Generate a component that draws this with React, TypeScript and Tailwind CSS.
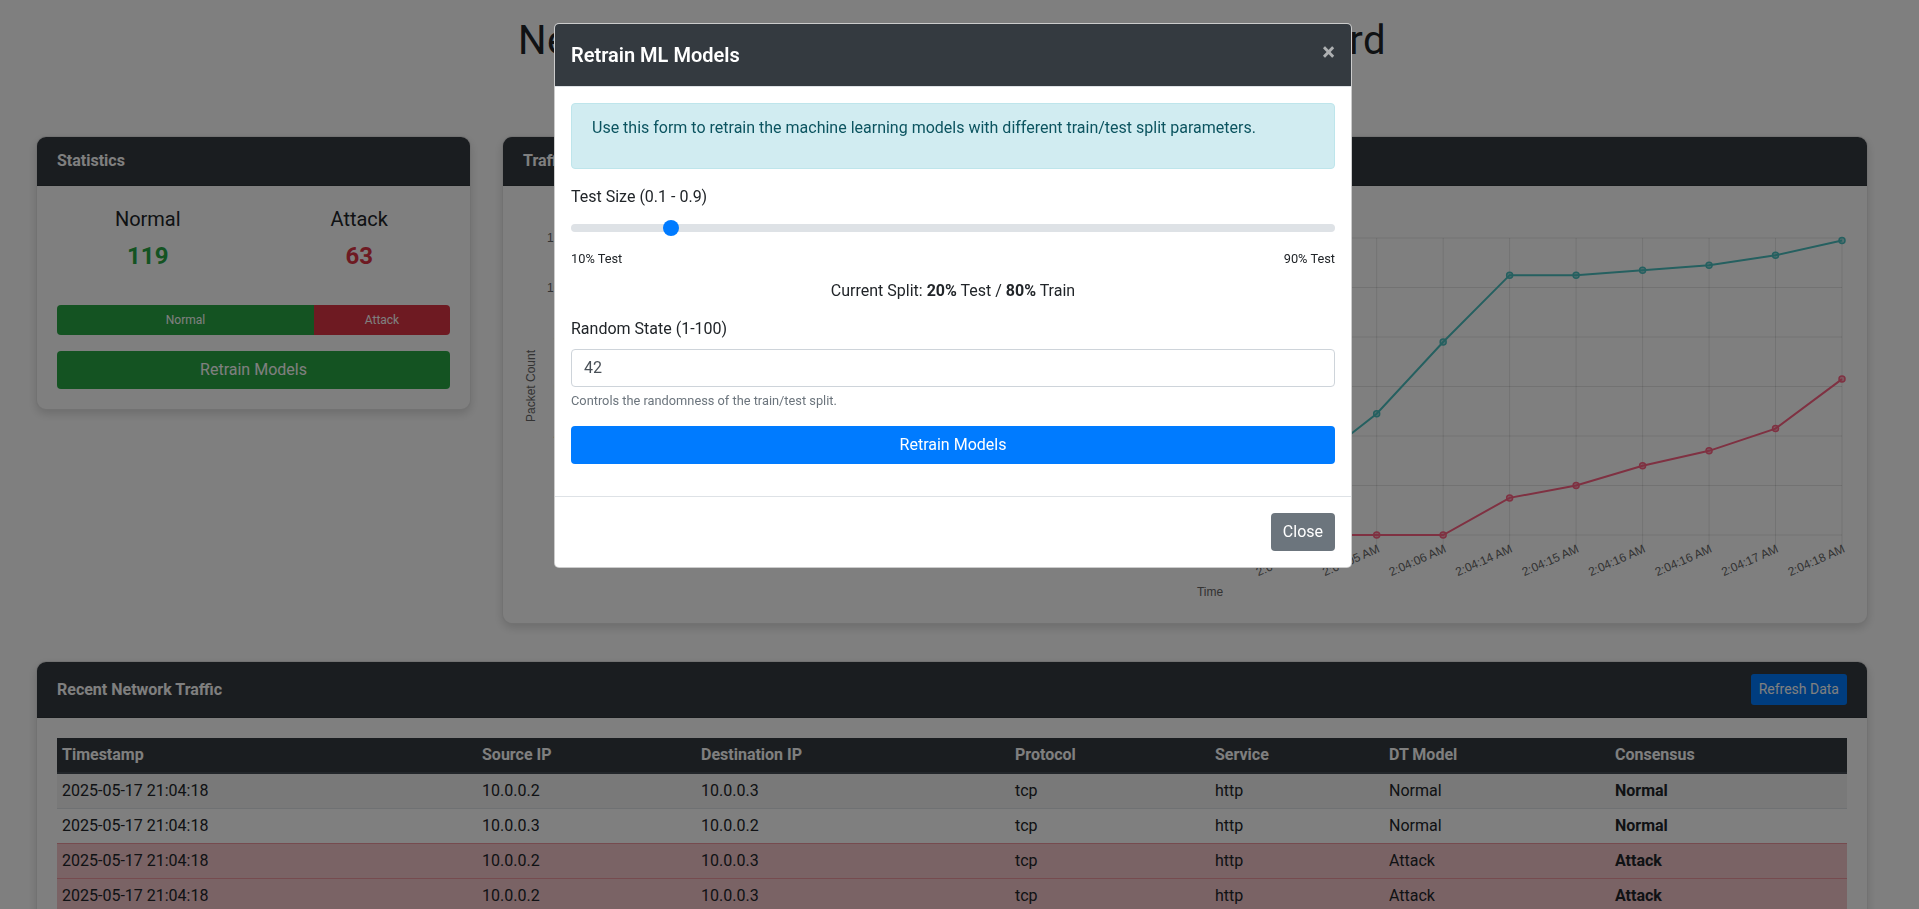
import React from 'react';

type Row = {
  time: string;
  src: string;
  dst: string;
  proto: string;
  service: string;
  dt: string;
  consensus: string;
};

const rows: Row[] = [
  { time: '2025-05-17 21:04:18', src: '10.0.0.2', dst: '10.0.0.3', proto: 'tcp', service: 'http', dt: 'Normal', consensus: 'Normal' },
  { time: '2025-05-17 21:04:18', src: '10.0.0.3', dst: '10.0.0.2', proto: 'tcp', service: 'http', dt: 'Normal', consensus: 'Normal' },
  { time: '2025-05-17 21:04:18', src: '10.0.0.2', dst: '10.0.0.3', proto: 'tcp', service: 'http', dt: 'Attack', consensus: 'Attack' },
  { time: '2025-05-17 21:04:18', src: '10.0.0.2', dst: '10.0.0.3', proto: 'tcp', service: 'http', dt: 'Attack', consensus: 'Attack' },
  { time: '2025-05-17 21:04:17', src: '10.0.0.3', dst: '10.0.0.2', proto: 'tcp', service: 'http', dt: 'Normal', consensus: 'Normal' },
  { time: '2025-05-17 21:04:17', src: '10.0.0.2', dst: '10.0.0.3', proto: 'tcp', service: 'http', dt: 'Attack', consensus: 'Attack' },
  { time: '2025-05-17 21:04:16', src: '10.0.0.3', dst: '10.0.0.2', proto: 'tcp', service: 'http', dt: 'Normal', consensus: 'Normal' },
];

// only the recent ticks carry a label; the early ones are blank
const labels = [
  '', '', '', '', '', '', '', '', '', '', '', '2:04:04 AM', '2:04:05 AM', '2:04:06 AM',
  '2:04:14 AM', '2:04:15 AM', '2:04:16 AM', '2:04:16 AM', '2:04:17 AM', '2:04:18 AM',
];
const normalSeries = [0, 2, 4, 6, 8, 10, 12, 15, 18, 21, 24, 28, 49, 78, 105, 105, 107, 109, 113, 119];
const attackSeries = [0, 0, 0, 0, 0, 0, 0, 0, 0, 0, 0, 0, 0, 0, 15, 20, 28, 34, 43, 63];

// chart area inside the svg
const LEFT = 56;
const RIGHT = 1319;
const TOP = 32;
const BOTTOM = 329;
const xAt = (i: number) => LEFT + (i * (RIGHT - LEFT)) / (labels.length - 1);
const yAt = (v: number) => BOTTOM - (v / 120) * (BOTTOM - TOP);

function TrafficChart() {
  const teal = 'rgb(75,192,192)';
  const pink = 'rgb(255,99,132)';
  const path = (data: number[]) => data.map((v, i) => `${i === 0 ? 'M' : 'L'}${xAt(i)},${yAt(v)}`).join(' ');
  return (
    <svg viewBox="0 0 1324 397" className="block h-[397px] w-full" fontFamily="'Liberation Sans', Arial, sans-serif">
      {/* legend */}
      <rect x="545" y="6" width="40" height="12" fill="rgba(75,192,192,0.2)" stroke={teal} strokeWidth="2" />
      <text x="591" y="16" fontSize="12" fill="#666">Normal Traffic</text>
      <rect x="690" y="6" width="40" height="12" fill="rgba(255,99,132,0.2)" stroke={pink} strokeWidth="2" />
      <text x="736" y="16" fontSize="12" fill="#666">Attack Traffic</text>

      {/* horizontal grid + y ticks */}
      {[0, 20, 40, 60, 80, 100, 120].map((v) => (
        <g key={v}>
          <line x1={LEFT - 10} x2={RIGHT} y1={yAt(v)} y2={yAt(v)} stroke="rgba(0,0,0,0.1)" />
          <text x={LEFT - 12} y={yAt(v) + 4} fontSize="12" fill="#666" textAnchor="end">{v}</text>
        </g>
      ))}
      {/* vertical grid + x ticks */}
      {labels.map((l, i) => (
        <g key={i}>
          <line x1={xAt(i)} x2={xAt(i)} y1={TOP} y2={BOTTOM + 10} stroke="rgba(0,0,0,0.1)" />
          {l && (
            <text transform={`translate(${xAt(i) + 2},${BOTTOM + 13}) rotate(-24)`} fontSize="12" fill="#666" textAnchor="end" dy="4">
              {l}
            </text>
          )}
        </g>
      ))}
      <text transform="translate(12,180) rotate(-90)" fontSize="12" fill="#666" textAnchor="middle">Packet Count</text>
      <text x="687" y="390" fontSize="12" fill="#666" textAnchor="middle">Time</text>

      <path d={path(normalSeries)} fill="none" stroke={teal} strokeWidth="2" />
      <path d={path(attackSeries)} fill="none" stroke={pink} strokeWidth="2" />
      {normalSeries.map((v, i) => (
        <circle key={`n${i}`} cx={xAt(i)} cy={yAt(v)} r="3" fill="rgba(75,192,192,0.5)" stroke={teal} strokeWidth="1.5" />
      ))}
      {attackSeries.map((v, i) => (
        <circle key={`a${i}`} cx={xAt(i)} cy={yAt(v)} r="3" fill="rgba(255,99,132,0.5)" stroke={pink} strokeWidth="1.5" />
      ))}
    </svg>
  );
}

function RetrainModal() {
  return (
    <div className="fixed inset-0 z-50 overflow-y-auto">
      <div className="ml-[554px] mt-[23px] w-[798px]">
        <div className="overflow-hidden rounded-[5px] border border-black/20 bg-white text-[#212529]">
          {/* header */}
          <div className="flex items-start justify-between border-b border-[#dee2e6] bg-[#343a40] p-4 text-white">
            <h5 className="text-[20px] font-semibold leading-[30px]">Retrain ML Models</h5>
            <button className="-my-4 -mr-4 p-4 text-[24px] font-bold leading-none text-white opacity-60">×</button>
          </div>

          {/* body */}
          <div className="p-4">
            <div className="mb-4 rounded-[4px] border border-[#bee5eb] bg-[#d1ecf1] px-5 py-3 text-[#0c5460]">
              <p className="mb-4 leading-6">Use this form to retrain the machine learning models with different train/test split parameters.</p>
            </div>

            <div className="mb-[14px]">
              <label className="mb-2 mt-[1px] block leading-6">Test Size (0.1 - 0.9)</label>
              <div className="relative flex h-[22px] items-center">
                <div className="h-2 w-full rounded-full bg-[#dee2e6]" />
                <div className="absolute left-[92px] top-[3px] h-4 w-4 rounded-full bg-[#007bff]" />
              </div>
              <div className="mt-[10px] flex justify-between text-[12.8px] leading-[19px]">
                <span>10% Test</span>
                <span>90% Test</span>
              </div>
              <div className="mt-[11px] text-center leading-6">
                Current Split: <strong>20%</strong> Test / <strong>80%</strong> Train
              </div>
            </div>

            <div className="mb-4">
              <label className="mb-2 block leading-6">Random State (1-100)</label>
              <div className="flex h-[38px] items-center rounded-[4px] border border-[#ced4da] px-3 text-[#495057]">42</div>
              <small className="mt-1 block text-[12.8px] leading-[19px] text-[#6c757d]">Controls the randomness of the train/test split.</small>
            </div>

            <button className="mb-4 flex h-[38px] w-full items-center justify-center rounded-[4px] bg-[#007bff] text-white">Retrain Models</button>
          </div>

          {/* footer */}
          <div className="flex justify-end border-t border-[#dee2e6] p-3">
            <button className="m-1 h-[38px] rounded-[4px] bg-[#6c757d] px-3 text-white">Close</button>
          </div>
        </div>
      </div>
    </div>
  );
}

export default function App() {
  const normal = 119;
  const attack = 63;
  const normalPct = (normal / (normal + attack)) * 100;

  return (
    <div className="relative min-h-screen bg-white font-['Roboto','Noto_Sans',sans-serif] text-[16px] text-[#212529]">
      <div className="pb-10 pl-[36px] pr-[51px]">
        <h1 className="mb-[71px] pt-[17px] text-center text-[40px] font-normal leading-[48px] tracking-[0.58px]">
          Network Intrusion Detection System Dashboard
        </h1>

        <div className="grid grid-cols-[435px_1fr] items-start gap-x-[31px]">
          {/* Statistics */}
          <div className="overflow-hidden rounded-[10px] border border-black/10 bg-white shadow-[0_4px_10px_rgba(0,0,0,0.15)]">
            <div className="border-b border-black/10 bg-[#343a40] px-5 py-3 font-bold leading-6 text-white">Statistics</div>
            <div className="p-5">
              <div className="-mx-[15px] grid grid-cols-2 text-center">
                <div>
                  <h5 className="mt-[1px] text-[20px] leading-6">Normal</h5>
                  <div className="mt-[11px] text-[24px] font-bold leading-[29px] text-[#28a745]">{normal}</div>
                </div>
                <div>
                  <h5 className="mt-[1px] text-[20px] leading-6">Attack</h5>
                  <div className="mt-[11px] text-[24px] font-bold leading-[29px] text-[#dc3545]">{attack}</div>
                </div>
              </div>
              <div className="mt-[34px] flex h-[30px] overflow-hidden rounded-[4px] bg-[#e9ecef] text-[12px] text-white">
                <div className="flex items-center justify-center bg-[#28a745]" style={{ width: `${normalPct}%` }}>Normal</div>
                <div className="flex flex-1 items-center justify-center bg-[#dc3545]">Attack</div>
              </div>
              <button className="mt-4 flex h-[38px] w-full items-center justify-center rounded-[4px] bg-[#28a745] text-white">Retrain Models</button>
            </div>
          </div>

          {/* Traffic chart */}
          <div className="overflow-hidden rounded-[10px] border border-black/10 bg-white shadow-[0_4px_10px_rgba(0,0,0,0.15)]">
            <div className="border-b border-black/10 bg-[#343a40] px-5 py-3 font-bold leading-6 text-white">Traffic Over Time</div>
            <div className="p-5">
              <TrafficChart />
            </div>
          </div>
        </div>

        {/* Recent traffic */}
        <div className="mt-[37px] overflow-hidden rounded-[10px] border border-black/10 bg-white shadow-[0_4px_10px_rgba(0,0,0,0.15)]">
          <div className="flex items-center justify-between border-b border-black/10 bg-[#343a40] px-5 py-3 text-white">
            <span className="font-bold leading-6">Recent Network Traffic</span>
            <button className="h-[31px] rounded-[3px] bg-[#007bff] px-2 text-[14px] text-white">Refresh Data</button>
          </div>
          <div className="p-5">
            <table className="w-full table-fixed border-collapse text-left">
              <colgroup>
                <col className="w-[420px]" />
                <col className="w-[219px]" />
                <col className="w-[314px]" />
                <col className="w-[200px]" />
                <col className="w-[174px]" />
                <col className="w-[226px]" />
                <col />
              </colgroup>
              <thead>
                <tr className="bg-[#343a40] text-white">
                  {['Timestamp', 'Source IP', 'Destination IP', 'Protocol', 'Service', 'DT Model', 'Consensus'].map((h) => (
                    <th key={h} className="border-b-2 border-[#454d55] px-[5px] py-[5px] font-bold leading-6">{h}</th>
                  ))}
                </tr>
              </thead>
              <tbody>
                {rows.map((r, i) => {
                  const attackRow = r.consensus === 'Attack';
                  const bg = attackRow ? 'bg-[#f5c6cb]' : i % 2 === 0 ? 'bg-black/5' : 'bg-white';
                  const border = attackRow ? 'border-[#ed969e]' : 'border-[#dee2e6]';
                  return (
                    <tr key={i} className={bg}>
                      {[r.time, r.src, r.dst, r.proto, r.service, r.dt].map((c, j) => (
                        <td key={j} className={`border-t ${border} px-[5px] py-[5px] leading-6`}>{c}</td>
                      ))}
                      <td className={`border-t ${border} px-[5px] py-[5px] font-bold leading-6`}>{r.consensus}</td>
                    </tr>
                  );
                })}
              </tbody>
            </table>
          </div>
        </div>
      </div>

      {/* modal backdrop */}
      <div className="fixed inset-0 z-40 bg-black/50" />
      <RetrainModal />
    </div>
  );
}
